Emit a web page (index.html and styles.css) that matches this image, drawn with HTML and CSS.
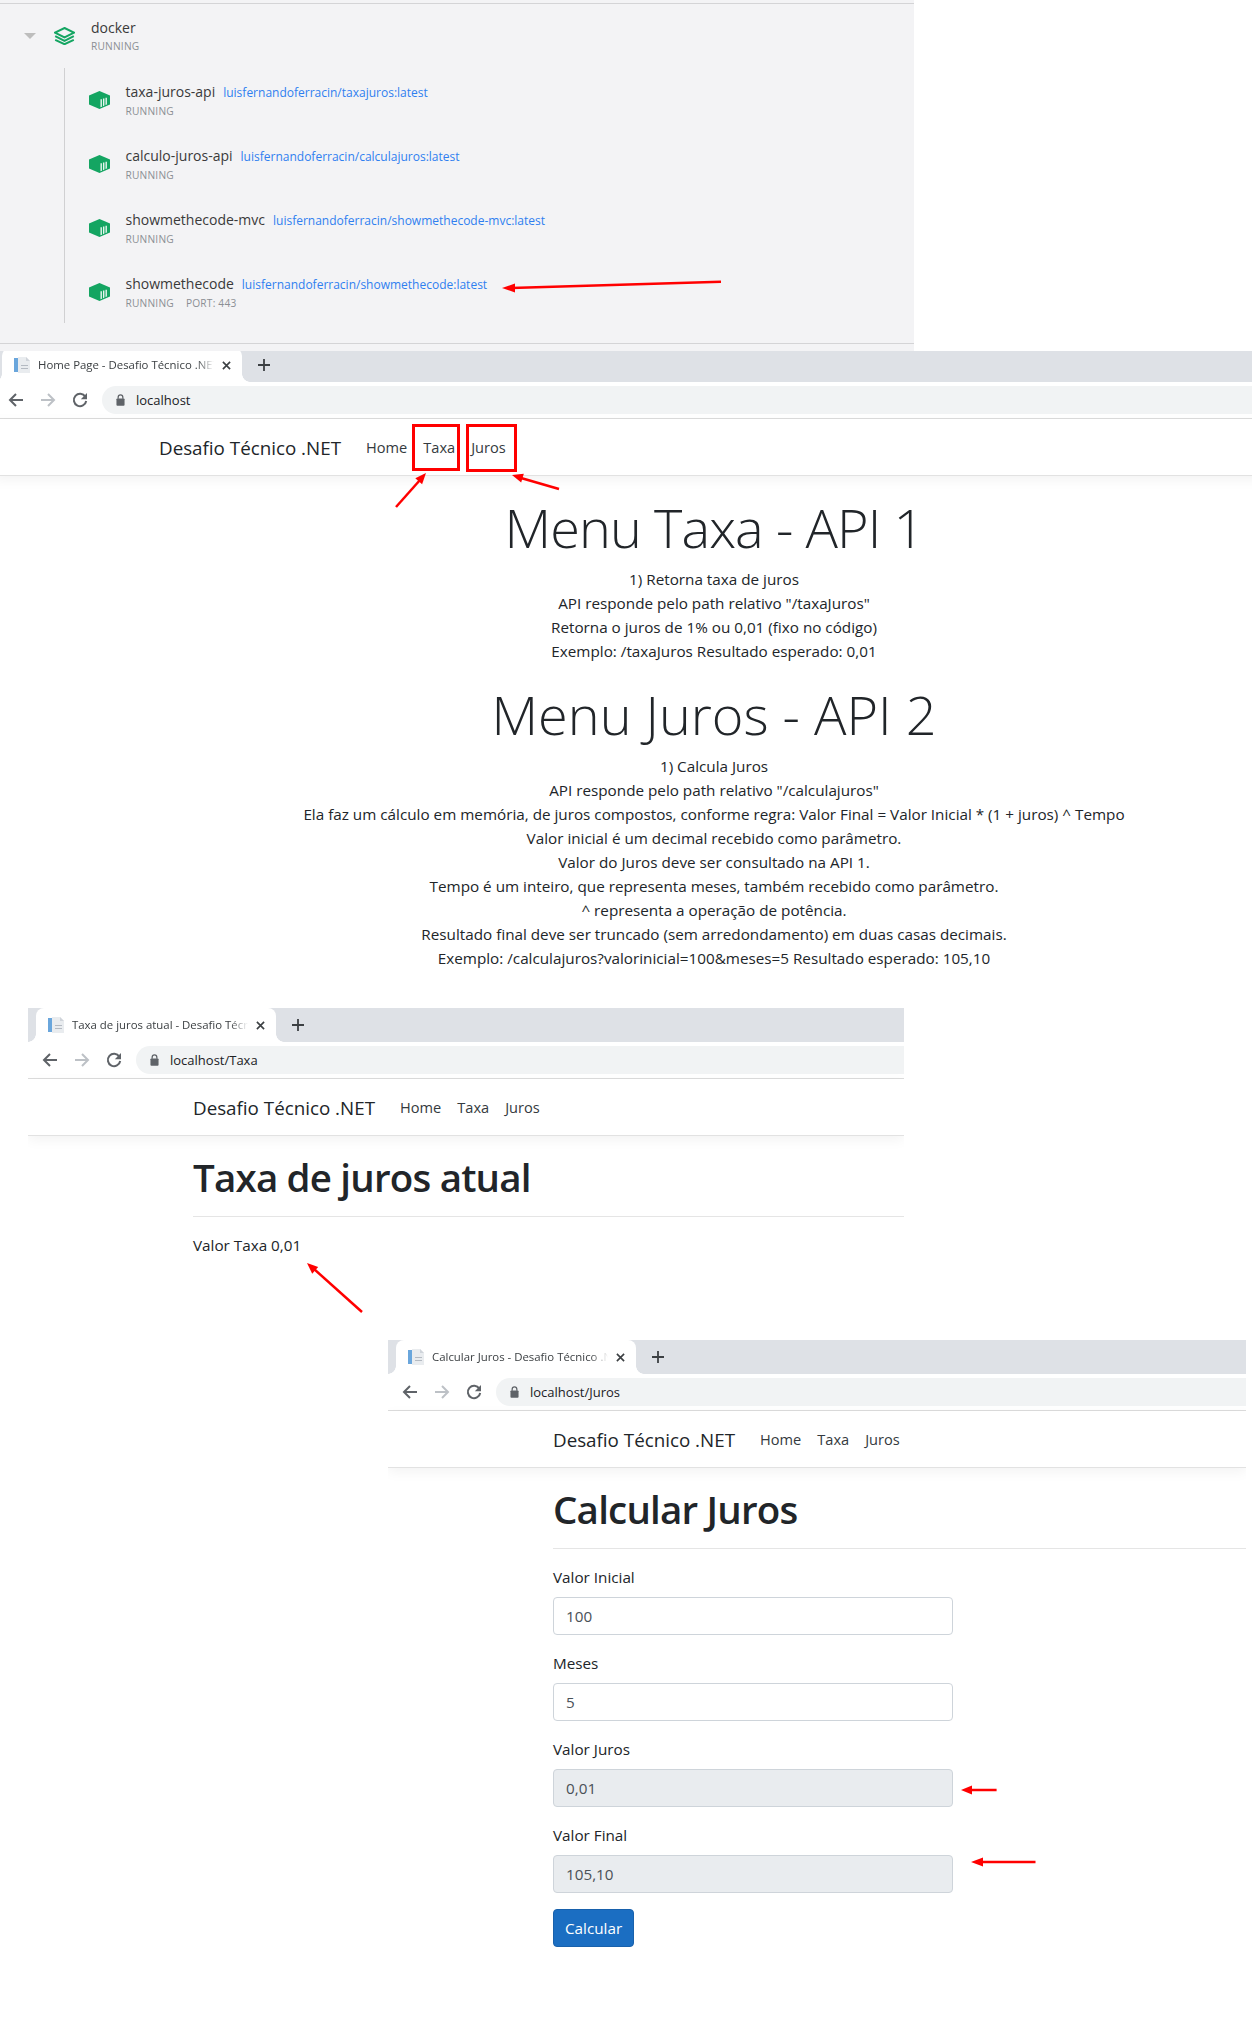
FILE: index.html
```html
<!DOCTYPE html>
<html lang="pt-BR">
<head>
<meta charset="utf-8">
<title>Desafio Técnico .NET</title>
<link rel="stylesheet" href="styles.css">
</head>
<body>
<svg class="defs" width="0" height="0" aria-hidden="true">
  <symbol id="i-stack" viewBox="0 0 21 18"><path d="M10.5 1 20 5.7 10.5 10.5 1 5.7Z" fill="none" stroke="currentColor" stroke-width="2"/><path d="M1.2 9.2 10.5 13.8 19.8 9.2M1.2 12.9 10.5 17.2 19.8 12.9" fill="none" stroke="currentColor" stroke-width="2"/></symbol>
  <symbol id="i-box" viewBox="0 0 21 18"><path d="M10.5 0 21 4.6V13.4L10.5 18 0 13.4V4.6Z" fill="currentColor"/><path d="M11.5 8.3h1.4v7.4l-1.4.6ZM14 7.6h1.4v7l-1.4.6ZM16.5 6.8h1.4v6.7l-1.4.6Z" fill="#fff" opacity=".9"/></symbol>
  <symbol id="i-fav" viewBox="0 0 17 16"><rect x="0" y="1" width="4" height="14" fill="#6aa6dc"/><path d="M4 0h8l4 4v12H4Z" fill="#e9ecef"/><path d="M12 0l4 4h-4Z" fill="#cfd4da"/><path d="M7 8h7v1H7ZM7 11h7v1H7Z" fill="#b4bac2"/></symbol>
  <symbol id="i-back" viewBox="0 0 16 16"><path d="M15 8H2M8 2 2 8l6 6" fill="none" stroke="currentColor" stroke-width="2"/></symbol>
  <symbol id="i-fwd" viewBox="0 0 16 16"><path d="M1 8h13M8 2l6 6-6 6" fill="none" stroke="currentColor" stroke-width="2"/></symbol>
  <symbol id="i-reload" viewBox="0 0 16 16"><path d="M13.3 4.6A6.2 6.2 0 1 0 14.2 9" fill="none" stroke="currentColor" stroke-width="2"/><path d="M15 1v6.2H8.8Z" fill="currentColor"/></symbol>
  <symbol id="i-lock" viewBox="0 0 10 13"><path d="M2.4 5V3.4a2.6 2.6 0 0 1 5.2 0V5" fill="none" stroke="currentColor" stroke-width="1.4"/><rect x="0.5" y="4.8" width="9" height="8" rx="1" fill="currentColor"/></symbol>
  <symbol id="i-close" viewBox="0 0 10 10"><path d="M1 1l8 8M9 1 1 9" fill="none" stroke="currentColor" stroke-width="1.8"/></symbol>
  <symbol id="i-plus" viewBox="0 0 12 12"><path d="M6 0v12M0 6h12" fill="none" stroke="currentColor" stroke-width="1.8"/></symbol>
</svg>

<div class="canvas">

  <section class="panel">
    <div class="rule rule-top"></div>
    <div class="group-head">
      <span class="caret"></span>
      <svg class="stack-icon"><use href="#i-stack"/></svg>
      <div>
        <div class="name">docker</div>
        <div class="status">RUNNING</div>
      </div>
    </div>
    <ul class="services">
      <li class="service">
        <svg class="box-icon"><use href="#i-box"/></svg>
        <div>
          <div class="service-line"><span class="name">taxa-juros-api</span><a class="image">luisfernandoferracin/taxajuros:latest</a></div>
          <div class="status">RUNNING</div>
        </div>
      </li>
      <li class="service">
        <svg class="box-icon"><use href="#i-box"/></svg>
        <div>
          <div class="service-line"><span class="name">calculo-juros-api</span><a class="image">luisfernandoferracin/calculajuros:latest</a></div>
          <div class="status">RUNNING</div>
        </div>
      </li>
      <li class="service">
        <svg class="box-icon"><use href="#i-box"/></svg>
        <div>
          <div class="service-line"><span class="name">showmethecode-mvc</span><a class="image">luisfernandoferracin/showmethecode-mvc:latest</a></div>
          <div class="status">RUNNING</div>
        </div>
      </li>
      <li class="service">
        <svg class="box-icon"><use href="#i-box"/></svg>
        <div>
          <div class="service-line"><span class="name">showmethecode</span><a class="image">luisfernandoferracin/showmethecode:latest</a></div>
          <div class="status status-row"><span>RUNNING</span><span>PORT: 443</span></div>
        </div>
      </li>
    </ul>
    <div class="rule rule-bottom"></div>
  </section>

  <section class="window window-home">
    <div class="tabbar">
      <div class="tab">
        <svg class="fav"><use href="#i-fav"/></svg>
        <span class="tab-title">Home Page - Desafio Técnico .NET</span>
        <svg class="tab-close"><use href="#i-close"/></svg>
      </div>
      <svg class="tab-plus"><use href="#i-plus"/></svg>
    </div>
    <div class="toolbar">
      <svg class="nav-icon"><use href="#i-back"/></svg>
      <svg class="nav-icon nav-off"><use href="#i-fwd"/></svg>
      <svg class="nav-icon"><use href="#i-reload"/></svg>
      <div class="omnibox"><svg class="lock"><use href="#i-lock"/></svg><span>localhost</span></div>
    </div>
    <nav class="navbar">
      <span class="brand">Desafio Técnico .NET</span>
      <a class="nav-link">Home</a><a class="nav-link">Taxa</a><a class="nav-link">Juros</a>
    </nav>
    <main class="content content-center">
      <h1 class="display">Menu Taxa - API 1</h1>
      <p>1) Retorna taxa de juros</p>
      <p>API responde pelo path relativo "/taxaJuros"</p>
      <p>Retorna o juros de 1% ou 0,01 (fixo no código)</p>
      <p>Exemplo: /taxaJuros Resultado esperado: 0,01</p>
      <h1 class="display display-next">Menu Juros - API 2</h1>
      <p>1) Calcula Juros</p>
      <p>API responde pelo path relativo "/calculajuros"</p>
      <p>Ela faz um cálculo em memória, de juros compostos, conforme regra: Valor Final = Valor Inicial * (1 + juros) ^ Tempo</p>
      <p>Valor inicial é um decimal recebido como parâmetro.</p>
      <p>Valor do Juros deve ser consultado na API 1.</p>
      <p>Tempo é um inteiro, que representa meses, também recebido como parâmetro.</p>
      <p>^ representa a operação de potência.</p>
      <p>Resultado final deve ser truncado (sem arredondamento) em duas casas decimais.</p>
      <p>Exemplo: /calculajuros?valorinicial=100&amp;meses=5 Resultado esperado: 105,10</p>
    </main>
  </section>

  <section class="window window-taxa">
    <div class="tabbar">
      <div class="tab">
        <svg class="fav"><use href="#i-fav"/></svg>
        <span class="tab-title">Taxa de juros atual - Desafio Técnico .NET</span>
        <svg class="tab-close"><use href="#i-close"/></svg>
      </div>
      <svg class="tab-plus"><use href="#i-plus"/></svg>
    </div>
    <div class="toolbar">
      <svg class="nav-icon"><use href="#i-back"/></svg>
      <svg class="nav-icon nav-off"><use href="#i-fwd"/></svg>
      <svg class="nav-icon"><use href="#i-reload"/></svg>
      <div class="omnibox"><svg class="lock"><use href="#i-lock"/></svg><span>localhost/Taxa</span></div>
    </div>
    <nav class="navbar">
      <span class="brand">Desafio Técnico .NET</span>
      <a class="nav-link">Home</a><a class="nav-link">Taxa</a><a class="nav-link">Juros</a>
    </nav>
    <main class="content">
      <h1 class="title">Taxa de juros atual</h1>
      <hr class="divider">
      <p>Valor Taxa 0,01</p>
    </main>
  </section>

  <section class="window window-juros">
    <div class="tabbar">
      <div class="tab">
        <svg class="fav"><use href="#i-fav"/></svg>
        <span class="tab-title">Calcular Juros - Desafio Técnico .NET</span>
        <svg class="tab-close"><use href="#i-close"/></svg>
      </div>
      <svg class="tab-plus"><use href="#i-plus"/></svg>
    </div>
    <div class="toolbar">
      <svg class="nav-icon"><use href="#i-back"/></svg>
      <svg class="nav-icon nav-off"><use href="#i-fwd"/></svg>
      <svg class="nav-icon"><use href="#i-reload"/></svg>
      <div class="omnibox"><svg class="lock"><use href="#i-lock"/></svg><span>localhost/Juros</span></div>
    </div>
    <nav class="navbar">
      <span class="brand">Desafio Técnico .NET</span>
      <a class="nav-link">Home</a><a class="nav-link">Taxa</a><a class="nav-link">Juros</a>
    </nav>
    <main class="content">
      <h1 class="title">Calcular Juros</h1>
      <hr class="divider">
      <form class="form">
        <label class="field"><span>Valor Inicial</span><input class="input" value="100"></label>
        <label class="field"><span>Meses</span><input class="input" value="5"></label>
        <label class="field"><span>Valor Juros</span><input class="input" value="0,01" disabled></label>
        <label class="field"><span>Valor Final</span><input class="input" value="105,10" disabled></label>
        <button class="button" type="button">Calcular</button>
      </form>
    </main>
  </section>

  <svg class="annotations" viewBox="0 0 1252 2040" width="1252" height="2040" aria-hidden="true">
    <rect class="mark" x="413.5" y="425.5" width="45" height="44"/>
    <rect class="mark" x="467.5" y="425.5" width="48" height="45"/>
    <line class="arrow" x1="721" y1="281.7" x2="511" y2="288"/>
    <polygon class="head" points="502,288 515,283.5 515,292.5"/>
    <line class="arrow" x1="396" y1="507" x2="420" y2="480"/>
    <polygon class="head" points="426,473 422.1,484.3 415.3,478.3"/>
    <line class="arrow" x1="559" y1="489" x2="521" y2="478"/>
    <polygon class="head" points="512,475 523.8,473.8 521.2,482.4"/>
    <line class="arrow" x1="362" y1="1312" x2="314" y2="1269"/>
    <polygon class="head" points="307,1263 318.2,1266.9 312.2,1273.7"/>
    <line class="arrow" x1="996.6" y1="1790" x2="970" y2="1790"/>
    <polygon class="head" points="961,1790 972,1785.5 972,1794.5"/>
    <line class="arrow" x1="1035.5" y1="1862" x2="980" y2="1862"/>
    <polygon class="head" points="971,1862 983,1857.5 983,1866.5"/>
  </svg>
</div>
</body>
</html>
```

FILE: styles.css
```css
* { box-sizing: border-box; }
html, body { margin: 0; padding: 0; background: #fff; }
body { font-family: "Open Sans", "Noto Sans", sans-serif; color: #212529; font-size: 15.25px; line-height: 24px; }
.defs { position: absolute; }
.canvas { position: relative; width: 1252px; height: 2040px; overflow: hidden; background: #fff; }

/* Docker panel */
.panel { position: absolute; left: 0; top: 0; width: 914px; height: 351px; background: #f3f3f5; }
.rule { height: 1px; background: #d4d4d6; }
.rule-top { margin-top: 3px; }
.rule-bottom { margin-top: 20px; }
.group-head { display: flex; align-items: center; padding: 14px 0 0 24px; }
.caret { width: 0; height: 0; border-left: 6px solid transparent; border-right: 6px solid transparent; border-top: 6px solid #bdbdbd; margin: 0 18px 0 0; }
.stack-icon { width: 21px; height: 18px; color: #14a562; margin-right: 16px; }
.name { font-size: 14px; line-height: 20px; color: #3a3a3a; }
.status { font-size: 10.2px; line-height: 16px; color: #8b8f94; letter-spacing: .2px; }
.status-row { display: flex; gap: 12px; }
.services { list-style: none; margin: 14px 0 0 64px; padding: 14px 0 13px 24px; border-left: 1px solid #d0d0d2; display: flex; flex-direction: column; gap: 28px; }
.service { display: flex; align-items: center; gap: 15.5px; height: 36px; }
.box-icon { width: 21px; height: 18px; color: #14a562; flex: none; }
.service-line { display: flex; align-items: baseline; gap: 8px; }
.image { font-size: 12px; line-height: 20px; color: #2f7ff0; }

/* Browser windows */
.window { position: absolute; overflow: hidden; background: #fff; }
.window-home { left: -6px; top: 351px; width: 1440px; }
.window-home .tabbar { height: 31px; overflow: hidden; }
.window-taxa { left: 28px; top: 1008px; width: 876px; }
.window-juros { left: 388px; top: 1340px; width: 858px; }

.tabbar { height: 34px; background: #dee1e6; display: flex; align-items: flex-end; padding-left: 8px; }
.tab { position: relative; width: 240px; height: 34px; flex: none; background: #fff; border-radius: 8px 8px 0 0; display: flex; align-items: center; padding: 0 12px; }
.tab::before, .tab::after { content: ""; position: absolute; bottom: 0; width: 8px; height: 8px; }
.tab::before { left: -8px; background: radial-gradient(circle at 0 0, #dee1e6 7.5px, #fff 8px); }
.tab::after { right: -8px; background: radial-gradient(circle at 100% 0, #dee1e6 7.5px, #fff 8px); }
.fav { width: 17px; height: 16px; flex: none; margin-right: 7px; }
.tab-title { flex: 1; min-width: 0; white-space: nowrap; overflow: hidden; font-size: 11.4px; line-height: 16px; color: #3c4043; -webkit-mask-image: linear-gradient(to right, #000 90%, transparent); mask-image: linear-gradient(to right, #000 90%, transparent); }
.tab-close { width: 9px; height: 9px; color: #3c4043; flex: none; margin: 0 -1px 0 8px; }
.tab-plus { width: 12px; height: 12px; color: #3c4043; margin: 0 0 11px 16px; flex: none; }

.toolbar { height: 37px; background: #fff; border-bottom: 1px solid #dcdcdc; display: flex; align-items: flex-start; padding: 4px 0 0 14px; }
.nav-icon { width: 16px; height: 16px; color: #5f6368; margin: 6px 16px 0 0; flex: none; }
.nav-off { color: #bdc1c6; }
.omnibox { flex: 1; height: 28px; margin-left: -2px; background: #f1f3f4; border-radius: 14px 0 0 14px; display: flex; align-items: center; font-size: 13px; color: #202124; padding-left: 14px; }
.lock { width: 9px; height: 12px; color: #5f6368; margin-right: 11px; flex: none; }

.navbar { height: 57px; padding-left: 165px; border-bottom: 1px solid #e2e2e2; box-shadow: 0 4px 12px rgba(0, 0, 0, .05); display: flex; align-items: center; position: relative; }
.brand { font-size: 18.8px; line-height: 30px; margin: 2px 25px 0 0; color: #212529; }
.nav-link { font-size: 14.6px; line-height: 24px; margin-right: 16px; color: #343a40; }

.content { padding: 18px 0 0 165px; width: 1275px; }
.content p { margin: 0; }
.content-center { text-align: center; }
.display { font-size: 54px; line-height: 67px; font-weight: 300; letter-spacing: -.9px; margin: 0 0 6px; color: #212529; }
.display-next { margin-top: 18px; letter-spacing: 0; }
.title { font-size: 38.5px; line-height: 48px; font-weight: 600; letter-spacing: -.8px; margin: -1px 0 15px; color: #212529; }
.divider { border: 0; height: 1px; margin: 0 0 16px; background: #e5e5e5; }

.form { display: flex; flex-direction: column; align-items: flex-start; }
.field { display: flex; flex-direction: column; gap: 8px; margin-bottom: 16px; }
.input { width: 400px; height: 38px; padding: 6px 12px; border: 1px solid #ced4da; border-radius: 4px; font: inherit; color: #495057; background: #fff; }
.input:disabled { background: #e9ecef; color: #495057; opacity: 1; }
.button { height: 38px; padding: 6px 11px; background: #1b6ec2; border: 1px solid #1861ac; border-radius: 4px; color: #fff; font: inherit; }

/* Annotations drawn on top of the collage */
.annotations { position: absolute; left: 0; top: 0; pointer-events: none; }
.mark { fill: none; stroke: #ff0000; stroke-width: 3; }
.arrow { stroke: #ff0000; stroke-width: 2.5; }
.head { fill: #ff0000; }
```
